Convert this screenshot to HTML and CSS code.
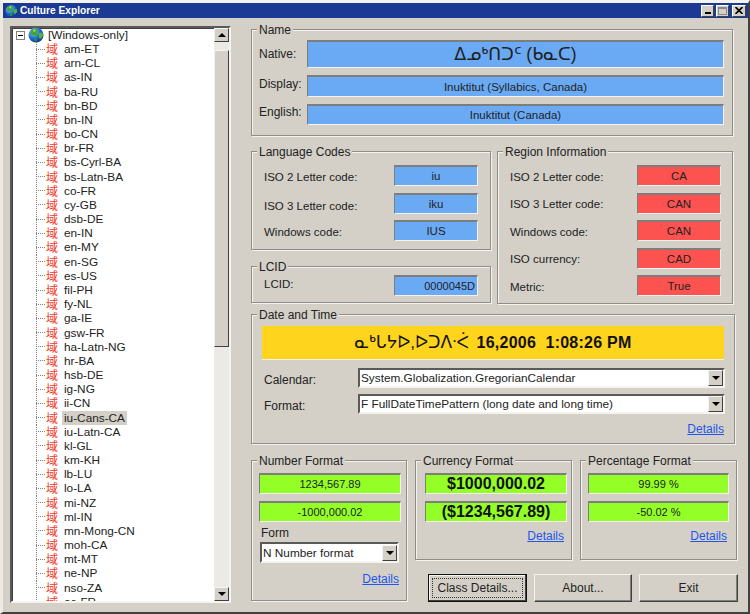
FILE: index.html
```html
<!DOCTYPE html>
<html lang="en">
<head>
    <meta charset="UTF-8">
    <meta name="viewport" content="width=device-width, initial-scale=1.0">
    <title>Culture Explorer</title>
    <link rel="stylesheet" href="styles.css">
</head>
<body>
    <svg class="defs" width="0" height="0">
        <defs>
            <radialGradient id="sea" cx="35%" cy="30%" r="75%">
                <stop offset="0" stop-color="#9fd4ff"/>
                <stop offset="0.55" stop-color="#1f6fd8"/>
                <stop offset="1" stop-color="#0a2f86"/>
            </radialGradient>
            <symbol id="globe" viewBox="0 0 16 16">
                <circle cx="8" cy="8" r="7.5" fill="url(#sea)"/>
                <path d="M4 2.5 8 1.5 10.5 3 9 5 10 7 8 9.5 6 8 4 8.500 2.500 6.500 3 4Z" fill="#3fa535"/>
                <path d="M11 6 14.500 5.500 15 9 12.500 12 11 10.500Z" fill="#58b33a"/>
                <path d="M6 11 9 11.500 8.500 14.500 6.500 14Z" fill="#2f8f3a"/>
                <path d="M5.500 3 7.500 2.500 7 4.500 5.500 4.500Z" fill="#d8e89a"/>
            </symbol>
        </defs>
    </svg>

    <div class="window">
        <div class="titlebar">
            <svg class="title-icon"><use href="#globe"/></svg>
            <span class="title-text">Culture Explorer</span>
            <div class="title-buttons">
                <span class="title-btn"><i class="ico-min"></i></span>
                <span class="title-btn"><i class="ico-max"></i></span>
                <span class="title-btn close">
                    <svg width="8" height="7" viewBox="0 0 8 7"><path d="M0.500 0 7.500 7M7.500 0 0.500 7" stroke="#000" stroke-width="1.600"/></svg>
                </span>
            </div>
        </div>

        <div class="main">
            <!-- Arbre des cultures -->
            <div class="tree">
                <div class="tree-list">
                    <div class="root">
                        <span class="expander"></span>
                        <svg class="root-icon"><use href="#globe"/></svg>
                        <span>[Windows-only]</span>
                    </div>
                    <div class="node"><span class="branch"></span><span class="glyph" lang="zh">域</span><span class="name">am-ET</span></div>
                    <div class="node"><span class="branch"></span><span class="glyph" lang="zh">域</span><span class="name">arn-CL</span></div>
                    <div class="node"><span class="branch"></span><span class="glyph" lang="zh">域</span><span class="name">as-IN</span></div>
                    <div class="node"><span class="branch"></span><span class="glyph" lang="zh">域</span><span class="name">ba-RU</span></div>
                    <div class="node"><span class="branch"></span><span class="glyph" lang="zh">域</span><span class="name">bn-BD</span></div>
                    <div class="node"><span class="branch"></span><span class="glyph" lang="zh">域</span><span class="name">bn-IN</span></div>
                    <div class="node"><span class="branch"></span><span class="glyph" lang="zh">域</span><span class="name">bo-CN</span></div>
                    <div class="node"><span class="branch"></span><span class="glyph" lang="zh">域</span><span class="name">br-FR</span></div>
                    <div class="node"><span class="branch"></span><span class="glyph" lang="zh">域</span><span class="name">bs-Cyrl-BA</span></div>
                    <div class="node"><span class="branch"></span><span class="glyph" lang="zh">域</span><span class="name">bs-Latn-BA</span></div>
                    <div class="node"><span class="branch"></span><span class="glyph" lang="zh">域</span><span class="name">co-FR</span></div>
                    <div class="node"><span class="branch"></span><span class="glyph" lang="zh">域</span><span class="name">cy-GB</span></div>
                    <div class="node"><span class="branch"></span><span class="glyph" lang="zh">域</span><span class="name">dsb-DE</span></div>
                    <div class="node"><span class="branch"></span><span class="glyph" lang="zh">域</span><span class="name">en-IN</span></div>
                    <div class="node"><span class="branch"></span><span class="glyph" lang="zh">域</span><span class="name">en-MY</span></div>
                    <div class="node"><span class="branch"></span><span class="glyph" lang="zh">域</span><span class="name">en-SG</span></div>
                    <div class="node"><span class="branch"></span><span class="glyph" lang="zh">域</span><span class="name">es-US</span></div>
                    <div class="node"><span class="branch"></span><span class="glyph" lang="zh">域</span><span class="name">fil-PH</span></div>
                    <div class="node"><span class="branch"></span><span class="glyph" lang="zh">域</span><span class="name">fy-NL</span></div>
                    <div class="node"><span class="branch"></span><span class="glyph" lang="zh">域</span><span class="name">ga-IE</span></div>
                    <div class="node"><span class="branch"></span><span class="glyph" lang="zh">域</span><span class="name">gsw-FR</span></div>
                    <div class="node"><span class="branch"></span><span class="glyph" lang="zh">域</span><span class="name">ha-Latn-NG</span></div>
                    <div class="node"><span class="branch"></span><span class="glyph" lang="zh">域</span><span class="name">hr-BA</span></div>
                    <div class="node"><span class="branch"></span><span class="glyph" lang="zh">域</span><span class="name">hsb-DE</span></div>
                    <div class="node"><span class="branch"></span><span class="glyph" lang="zh">域</span><span class="name">ig-NG</span></div>
                    <div class="node"><span class="branch"></span><span class="glyph" lang="zh">域</span><span class="name">ii-CN</span></div>
                    <div class="node"><span class="branch"></span><span class="glyph" lang="zh">域</span><span class="name selected">iu-Cans-CA</span></div>
                    <div class="node"><span class="branch"></span><span class="glyph" lang="zh">域</span><span class="name">iu-Latn-CA</span></div>
                    <div class="node"><span class="branch"></span><span class="glyph" lang="zh">域</span><span class="name">kl-GL</span></div>
                    <div class="node"><span class="branch"></span><span class="glyph" lang="zh">域</span><span class="name">km-KH</span></div>
                    <div class="node"><span class="branch"></span><span class="glyph" lang="zh">域</span><span class="name">lb-LU</span></div>
                    <div class="node"><span class="branch"></span><span class="glyph" lang="zh">域</span><span class="name">lo-LA</span></div>
                    <div class="node"><span class="branch"></span><span class="glyph" lang="zh">域</span><span class="name">mi-NZ</span></div>
                    <div class="node"><span class="branch"></span><span class="glyph" lang="zh">域</span><span class="name">ml-IN</span></div>
                    <div class="node"><span class="branch"></span><span class="glyph" lang="zh">域</span><span class="name">mn-Mong-CN</span></div>
                    <div class="node"><span class="branch"></span><span class="glyph" lang="zh">域</span><span class="name">moh-CA</span></div>
                    <div class="node"><span class="branch"></span><span class="glyph" lang="zh">域</span><span class="name">mt-MT</span></div>
                    <div class="node"><span class="branch"></span><span class="glyph" lang="zh">域</span><span class="name">ne-NP</span></div>
                    <div class="node"><span class="branch"></span><span class="glyph" lang="zh">域</span><span class="name">nso-ZA</span></div>
                    <div class="node"><span class="branch"></span><span class="glyph" lang="zh">域</span><span class="name">oc-FR</span></div>
                </div>
                <div class="scrollbar">
                    <span class="scroll-btn"><i class="arrow-up"></i></span>
                    <span class="scroll-gap"></span>
                    <span class="scroll-thumb"></span>
                    <span class="scroll-rest"></span>
                    <span class="scroll-btn"><i class="arrow-down"></i></span>
                </div>
            </div>

            <div class="panels">
                <!-- Name -->
                <div class="group name-group">
                    <span class="legend">Name</span>
                    <div class="name-row native-row">
                        <span class="label">Native:</span>
                        <span class="field blue native">ᐃᓄᒃᑎᑐᑦ (ᑲᓇᑕ)</span>
                    </div>
                    <div class="name-row display-row">
                        <span class="label raised">Display:</span>
                        <span class="field blue">Inuktitut (Syllabics, Canada)</span>
                    </div>
                    <div class="name-row english-row">
                        <span class="label raised">English:</span>
                        <span class="field blue">Inuktitut (Canada)</span>
                    </div>
                </div>

                <div class="codes">
                    <div class="codes-left">
                        <div class="group language-group">
                            <span class="legend">Language Codes</span>
                            <div class="code-rows">
                                <span class="label">ISO 2 Letter code:</span><span class="field blue">iu</span>
                                <span class="label lowered">ISO 3 Letter code:</span><span class="field blue">iku</span>
                                <span class="label">Windows code:</span><span class="field blue">IUS</span>
                            </div>
                        </div>
                        <div class="group lcid-group">
                            <span class="legend">LCID</span>
                            <div class="code-rows">
                                <span class="label raised">LCID:</span><span class="field blue right small">0000045D</span>
                            </div>
                        </div>
                    </div>
                    <div class="group region-group">
                        <span class="legend">Region Information</span>
                        <div class="code-rows">
                            <span class="label">ISO 2 Letter code:</span><span class="field red">CA</span>
                            <span class="label">ISO 3 Letter code:</span><span class="field red">CAN</span>
                            <span class="label">Windows code:</span><span class="field red">CAN</span>
                            <span class="label">ISO currency:</span><span class="field red">CAD</span>
                            <span class="label">Metric:</span><span class="field red">True</span>
                        </div>
                    </div>
                </div>

                <!-- Date and Time -->
                <div class="group date-group">
                    <span class="legend">Date and Time</span>
                    <div class="date-banner"><span class="syllabics">ᓇᒃᒐᔭᐅ,ᐅᑐᐱᐧᐹ</span> 16,2006  1:08:26 PM</div>
                    <div class="date-row">
                        <span class="label lowered">Calendar:</span>
                        <div class="combo"><span class="combo-text">System.Globalization.GregorianCalendar</span><span class="combo-btn"><i class="arrow-down"></i></span></div>
                    </div>
                    <div class="date-row">
                        <span class="label lowered">Format:</span>
                        <div class="combo"><span class="combo-text">F FullDateTimePattern (long date and long time)</span><span class="combo-btn"><i class="arrow-down"></i></span></div>
                    </div>
                    <div class="details-row"><a href="#">Details</a></div>
                </div>

                <div class="formats">
                    <div class="group number-group">
                        <span class="legend">Number Format</span>
                        <span class="field green small">1234,567.89</span>
                        <span class="field green small">-1000,000.02</span>
                        <span class="form-label">Form</span>
                        <div class="combo"><span class="combo-text">N Number format</span><span class="combo-btn"><i class="arrow-down"></i></span></div>
                        <div class="details-row"><a href="#">Details</a></div>
                    </div>
                    <div class="formats-right">
                        <div class="formats-top">
                            <div class="group currency-group">
                                <span class="legend">Currency Format</span>
                                <span class="field green big">$1000,000.02</span>
                                <span class="field green big">($1234,567.89)</span>
                                <div class="details-row"><a href="#">Details</a></div>
                            </div>
                            <div class="group percent-group">
                                <span class="legend">Percentage Format</span>
                                <span class="field green small">99.99 %</span>
                                <span class="field green small">-50.02 %</span>
                                <div class="details-row"><a href="#">Details</a></div>
                            </div>
                        </div>
                        <div class="actions">
                            <button class="default"><span>Class Details...</span></button>
                            <button class="about">About...</button>
                            <button class="exit">Exit</button>
                        </div>
                    </div>
                </div>
            </div>
        </div>
    </div>
</body>
</html>
```

FILE: styles.css
```css
* {
    box-sizing: border-box;
}

body {
    margin: 0;
    background-color: #d4d0c8;
    font-family: "Liberation Sans", "DejaVu Sans", sans-serif;
    font-size: 12px;
    color: #222;
}

.defs {
    display: block;
    height: 0;
}

.window {
    width: 750px;
    height: 614px;
    overflow: hidden;
    background-color: #d4d0c8;
    border-style: solid;
    border-width: 3px 2px 2px 3px;
    border-color: #f4f3ef #404040 #404040 #ece9e2;
}

/* Barre de titre */
.titlebar {
    display: flex;
    align-items: center;
    height: 15px;
    padding: 0 2px 0 1px;
    background-color: #1a3a94;
}

.title-icon {
    width: 13px;
    height: 14px;
    margin: 0 2px 0 1px;
}

.title-text {
    color: #fff;
    font-weight: bold;
    font-size: 10.2px;
}

.title-buttons {
    display: flex;
    margin-left: auto;
}

.title-btn {
    display: flex;
    align-items: center;
    justify-content: center;
    width: 13px;
    height: 12px;
    margin-left: 2px;
    background-color: #d4d0c8;
    border: 1px solid;
    border-color: #fff #404040 #404040 #fff;
}

.title-btn.close {
    width: 14px;
    margin-left: 3px;
}

.ico-min {
    display: block;
    width: 6px;
    height: 2px;
    margin-top: 5px;
    background-color: #000;
}

.ico-max {
    display: block;
    width: 9px;
    height: 8px;
    border: 1px solid #8a8a8a;
    border-top-width: 2px;
}

.main {
    display: flex;
    padding-left: 7px;
}

/* Arbre */
.tree {
    display: flex;
    width: 221px;
    height: 577px;
    margin-top: 8px;
    background-color: #fff;
    border: 2px solid;
    border-color: #5a5a5a #f4f3ef #f4f3ef #5a5a5a;
    box-shadow: inset 1px 1px 0 #404040;
}

.tree-list {
    flex: 1;
    overflow: hidden;
    font-size: 11.8px;
}

.root {
    display: flex;
    align-items: center;
    height: 14px;
    padding-left: 4px;
}

.expander {
    width: 9px;
    height: 9px;
    margin-right: 3px;
    border: 1px solid #808080;
    background: linear-gradient(#000, #000) center / 5px 1px no-repeat #fff;
}

.root-icon {
    width: 16px;
    height: 16px;
    margin-right: 4px;
    flex-shrink: 0;
}

.node {
    display: flex;
    align-items: center;
    height: 14.18px;
    padding-left: 24px;
}

.branch {
    width: 10px;
    align-self: stretch;
    background-image:
        repeating-linear-gradient(to bottom, #808080 0 1px, transparent 1px 2px),
        repeating-linear-gradient(to right, #808080 0 1px, transparent 1px 2px);
    background-size: 1px 100%, 100% 1px;
    background-position: left top, left center;
    background-repeat: no-repeat;
}

.glyph {
    width: 14px;
    font-family: "Noto Sans CJK SC", sans-serif;
    font-size: 12px;
    line-height: 14px;
    color: #f5381c;
}

.name {
    margin-left: 2px;
    padding: 0 2px;
    line-height: 14px;
    white-space: nowrap;
}

.selected {
    background-color: #d4d0c8;
}

.scrollbar {
    display: flex;
    flex-direction: column;
    width: 15px;
    flex-shrink: 0;
}

.scroll-btn {
    display: flex;
    align-items: center;
    justify-content: center;
    height: 14px;
    background-color: #d4d0c8;
    border: 1px solid;
    border-color: #f4f3ef #404040 #404040 #f4f3ef;
}

.scroll-gap {
    height: 8px;
    background-color: #eceae5;
}

.scroll-thumb {
    height: 297px;
    background-color: #d4d0c8;
    border: 1px solid;
    border-color: #f4f3ef #404040 #404040 #f4f3ef;
}

.scroll-rest {
    flex: 1;
    background-color: #eceae5;
}

.arrow-up,
.arrow-down {
    display: block;
    width: 0;
    height: 0;
    border-left: 4px solid transparent;
    border-right: 4px solid transparent;
}

.arrow-up {
    border-bottom: 4px solid #000;
}

.arrow-down {
    border-top: 4px solid #000;
}

/* Panneaux de droite */
.panels {
    width: 487px;
    margin-left: 20px;
    padding-top: 11px;
}

.group {
    position: relative;
    border: 1px solid #8f8d88;
    box-shadow: inset 1px 1px 0 #f4f3ef, 1px 1px 0 #f4f3ef;
}

.legend {
    position: absolute;
    top: -7px;
    left: 5px;
    padding: 0 2px;
    line-height: 14px;
    background-color: #d4d0c8;
    white-space: nowrap;
}

.label {
    font-size: 11.5px;
}

.field {
    display: flex;
    align-items: center;
    justify-content: center;
    height: 21px;
    font-size: 11.5px;
    border: 1px solid;
    border-color: #7d7d7d #f4f3ef #f4f3ef #7d7d7d;
    border-top-width: 2px;
    white-space: nowrap;
}

.blue {
    background-color: #6aaaf5;
}

.red {
    background-color: #fd5350;
}

.green {
    background-color: #93ff27;
}

.right {
    justify-content: flex-end;
    padding-right: 2px;
}

.field.small {
    font-size: 11px;
}

.raised {
    margin-bottom: 5px;
}

.lowered {
    margin-top: 4px;
}

/* Name */
.name-group {
    width: 482px;
    height: 107px;
    padding: 10px 8px 0 7px;
}

.name-row {
    display: flex;
    align-items: center;
    margin-bottom: 7px;
}

.name-row .label {
    width: 48px;
    font-size: 12px;
}

.name-row .field {
    flex: 1;
}

.native-row .field {
    height: 28px;
}

.display-row .field {
    height: 22px;
}

.field.native {
    font-size: 17.5px;
}

/* Codes */
.codes {
    display: flex;
    gap: 6px;
    margin-top: 15px;
}

.codes-left {
    width: 240px;
}

.language-group {
    height: 99px;
    padding: 13px 12px 0 12px;
}

.lcid-group {
    height: 37px;
    margin-top: 16px;
    padding: 8px 12px 0 12px;
}

.region-group {
    width: 236px;
    height: 153px;
    padding: 13px 11px 0 12px;
}

.code-rows {
    display: grid;
    grid-template-columns: 1fr 84px;
    grid-auto-rows: 21px;
    row-gap: 6.5px;
    align-items: center;
}

.code-rows .label {
    padding-top: 2px;
}

/* Date */
.date-group {
    width: 484px;
    height: 130px;
    margin-top: 10px;
    padding: 11px 10px 0 10px;
}

.date-banner {
    display: flex;
    align-items: center;
    justify-content: center;
    height: 34px;
    margin-bottom: 8px;
    background-color: #ffd41c;
    border-bottom: 1px solid #f4f3ef;
    font-size: 16px;
    font-weight: bold;
    letter-spacing: 0.25px;
    color: #111;
    white-space: pre;
}

.syllabics {
    margin-right: 3px;
    font-size: 17px;
    font-weight: normal;
    letter-spacing: 0;
}

.date-row {
    display: flex;
    align-items: center;
    margin-bottom: 6px;
}

.date-row .label {
    width: 96px;
    padding-left: 2px;
    font-size: 12px;
}

.date-row .combo {
    flex: 1;
    margin-right: -1px;
}

.combo {
    display: flex;
    align-items: center;
    height: 20px;
    font-size: 11.8px;
    background-color: #fff;
    border: 2px solid;
    border-color: #5a5a5a #f4f3ef #f4f3ef #5a5a5a;
}

.combo-text {
    flex: 1;
    padding-left: 1px;
    white-space: nowrap;
}

.combo-btn {
    display: flex;
    align-items: center;
    justify-content: center;
    width: 15px;
    height: 16px;
    background-color: #d4d0c8;
    border: 1px solid;
    border-color: #f4f3ef #404040 #404040 #f4f3ef;
}

.details-row {
    display: flex;
    justify-content: flex-end;
    line-height: 14px;
}

.date-group .details-row {
    margin-top: 8px;
}

a {
    color: #2255ee;
}

/* Formats */
.formats {
    display: flex;
    gap: 8px;
    margin-top: 16px;
}

.number-group {
    width: 156px;
    height: 141px;
    padding: 12px 5px 0 7px;
}

.number-group .field,
.currency-group .field,
.percent-group .field {
    margin-bottom: 7px;
}

.form-label {
    display: block;
    margin: -3px 0 2px 2px;
    line-height: 14px;
}

.number-group .combo {
    height: 21px;
    margin: 0 2px 0 1px;
}

.number-group .details-row {
    margin-top: 9px;
    padding-right: 2px;
}

.formats-right {
    width: 323px;
}

.formats-top {
    display: flex;
    gap: 8px;
}

.currency-group,
.percent-group {
    width: 157px;
    height: 100px;
    padding-top: 12px;
}

.currency-group {
    padding-left: 9px;
    padding-right: 4px;
}

.percent-group {
    padding-left: 7px;
    padding-right: 7px;
}

.currency-group .details-row {
    margin-top: 2px;
    padding-right: 3px;
}

.percent-group .details-row {
    margin-top: 2px;
    padding-right: 2px;
}

.field.big {
    font-size: 16px;
    font-weight: bold;
    color: #111;
}

.actions {
    display: flex;
    gap: 7px;
    margin-top: 14px;
    padding-left: 13px;
}

button {
    width: 98px;
    height: 28px;
    padding: 0;
    font: inherit;
    color: inherit;
    background-color: #d4d0c8;
    border: 1px solid;
    border-color: #f4f3ef #404040 #404040 #f4f3ef;
    box-shadow: inset -1px -1px 0 #808080;
}

.default {
    width: 99px;
    padding: 3px;
    border-color: #111;
    box-shadow: inset -1px -1px 0 #404040, inset 1px 1px 0 #f4f3ef;
}

.default span {
    display: flex;
    align-items: center;
    justify-content: center;
    height: 100%;
    border: 1px dotted #333;
}

.exit {
    width: 99px;
}
```
